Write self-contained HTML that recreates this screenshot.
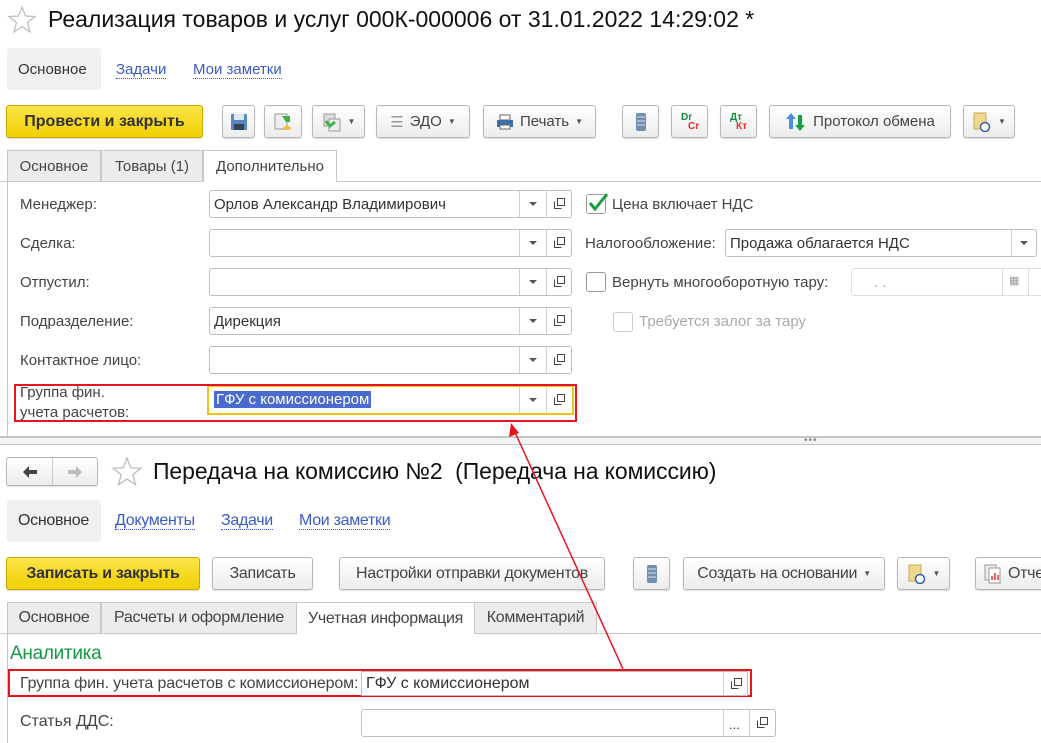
<!DOCTYPE html>
<html><head><meta charset="utf-8"><style>
*{box-sizing:border-box;margin:0;padding:0}
body{width:1041px;height:742px;overflow:hidden;background:#fff;font-family:"Liberation Sans",Arial,sans-serif;color:#333;position:relative}
.a{position:absolute;white-space:nowrap}
.btn{position:absolute;height:33px;border:1px solid #b8b8b8;border-radius:3px;background:linear-gradient(#fff,#ececec);box-shadow:0 1px 1px rgba(0,0,0,.15);font-size:15px;color:#444;display:flex;align-items:center;justify-content:center;gap:6px}
.y{background:linear-gradient(#fbe54a,#f1cf00);border-color:#c9a800;font-weight:bold;color:#333;font-size:16px}
.dd{font-size:8px;color:#555}
.tab{position:absolute;height:31px;border:1px solid #c8c8c8;border-bottom:none;background:#ececec;font-size:15px;color:#444;display:flex;align-items:center;justify-content:center}
.tab.act{background:#fff;height:32px}
.lbl{position:absolute;font-size:15px;color:#444}
.fld{position:absolute;height:28px;border:1px solid #bdbdbd;border-radius:3px;background:#fff;font-size:15px;color:#333}
.fld .t{position:absolute;left:4px;top:5px}
.fld .s1{position:absolute;top:0;bottom:0;border-left:1px solid #d0d0d0}
.tri{position:absolute;top:11px;width:0;height:0;border-left:4px solid transparent;border-right:4px solid transparent;border-top:4px solid #555}
.op{position:absolute;top:7px;width:11px;height:11px}
.lnk{position:absolute;font-size:15px;color:#3b5bc8;border-bottom:1px dotted #3b5bc8;line-height:16px}
.cb{position:absolute;width:20px;height:20px;border:1px solid #999;border-radius:3px;background:#fff}
.n{letter-spacing:-0.3px}
</style></head><body>
<svg class="a" style="left:7px;top:5px" width="30" height="30" viewBox="0 0 30 30"><polygon points="15,2 18.5,11 28,11.5 20.5,17.5 23,27 15,21.5 7,27 9.5,17.5 2,11.5 11.5,11" fill="none" stroke="#bbb" stroke-width="1.2"/></svg>
<div class="a" style="left:48px;top:6px;font-size:23px;color:#111">Реализация товаров и услуг 000К-000006 от 31.01.2022 14:29:02 *</div>
<div class="a" style="left:7px;top:48px;width:94px;height:42px;background:#f0f0f0;border-radius:3px"></div>
<div class="a" style="left:18px;top:61px;font-size:15px;color:#333">Основное</div>
<div class="lnk" style="left:116px;top:62px">Задачи</div>
<div class="lnk" style="left:193px;top:62px">Мои заметки</div>
<div class="btn y" style="left:6px;top:105px;width:197px">Провести и закрыть</div>
<div class="btn" style="left:222px;top:105px;width:33px"><svg width="18" height="18"><rect x="1" y="1" width="16" height="16" rx="1" fill="#5b86c0"/><rect x="4" y="1" width="10" height="6" fill="#dde8f5"/><rect x="4" y="11" width="10" height="6" fill="#345"/></svg></div>
<div class="btn" style="left:264px;top:105px;width:38px"><svg width="20" height="20"><rect x="2" y="2" width="12" height="15" fill="#eee" stroke="#999"/><path d="M9 4h8v6h-4z" fill="#3bb54a"/><ellipse cx="14" cy="16" rx="4" ry="2" fill="#e8c030"/></svg></div>
<div class="btn" style="left:312px;top:105px;width:53px"><svg width="20" height="20"><rect x="2" y="2" width="11" height="12" fill="#ddd" stroke="#999"/><rect x="7" y="7" width="11" height="12" fill="#eee" stroke="#999"/><path d="M4 9l4 5 5-4" stroke="#3bb54a" stroke-width="3" fill="none"/></svg><span class="dd">▼</span></div>
<div class="btn" style="left:376px;top:105px;width:94px"><span style="color:#999">☰</span> ЭДО <span class="dd">▼</span></div>
<div class="btn" style="left:483px;top:105px;width:113px"><svg width="18" height="16"><rect x="4" y="1" width="10" height="5" fill="#fff" stroke="#666"/><rect x="1" y="6" width="16" height="7" fill="#3d6fa8"/><rect x="4" y="11" width="10" height="4" fill="#fff" stroke="#666"/></svg>Печать <span class="dd">▼</span></div>
<div class="btn" style="left:622px;top:105px;width:37px"><svg width="12" height="20"><rect x="1" y="1" width="10" height="18" rx="2" fill="#6f8fb0"/><path d="M2 5h8M2 9h8M2 13h8" stroke="#dde" /></svg></div>
<div class="btn" style="left:671px;top:105px;width:37px;font-size:10px;font-weight:bold;line-height:9px;display:block;padding:7px 0 0 9px"><span style="color:#109040">Dr</span><br><span style="color:#e03030;margin-left:7px">Cr</span></div>
<div class="btn" style="left:720px;top:105px;width:37px;font-size:10px;font-weight:bold;line-height:9px;display:block;padding:7px 0 0 9px"><span style="color:#109040">Дт</span><br><span style="color:#e03030;margin-left:6px">Кт</span></div>
<div class="btn" style="left:769px;top:105px;width:182px"><svg width="22" height="22"><path d="M6 2l5 6H8v10H4V8H1z" fill="#4a8ee0"/><path d="M15 20l5-6h-3V4h-4v10h-3z" fill="#19a040"/></svg>Протокол обмена</div>
<div class="btn" style="left:963px;top:105px;width:52px"><svg width="20" height="20"><rect x="2" y="1" width="12" height="16" fill="#f0d890" stroke="#c9a850"/><circle cx="13" cy="15" r="4.5" fill="#fff" stroke="#3060b0" stroke-width="1.5"/></svg><span class="dd">▼</span></div>
<div class="a" style="left:0;top:181px;width:1041px;border-top:1px solid #c8c8c8"></div>
<div class="tab" style="left:7px;top:150px;width:94px">Основное</div>
<div class="tab" style="left:101px;top:150px;width:102px">Товары (1)</div>
<div class="tab act" style="left:203px;top:150px;width:134px">Дополнительно</div>
<div class="a" style="left:7px;top:181px;height:256px;border-left:1px solid #c8c8c8"></div>
<div class="lbl" style="left:20px;top:196px">Менеджер:</div>
<div class="lbl" style="left:20px;top:235px">Сделка:</div>
<div class="lbl" style="left:20px;top:274px">Отпустил:</div>
<div class="lbl" style="left:20px;top:313px">Подразделение:</div>
<div class="lbl" style="left:20px;top:352px">Контактное лицо:</div>
<div class="lbl" style="left:20px;top:383px;line-height:20px">Группа фин.<br>учета расчетов:</div>
<div class="fld" style="left:209px;top:190px;width:363px"><span class="t">Орлов Александр Владимирович</span><i class="s1" style="left:309px"></i><i class="tri" style="left:319px"></i><i class="s1" style="left:336px"></i><svg class="op" style="left:344px"><path d="M3.5 .5h7v7h-7zM.5 3.5v7h7" fill="none" stroke="#444"/></svg></div>
<div class="fld" style="left:209px;top:229px;width:363px"><i class="s1" style="left:309px"></i><i class="tri" style="left:319px"></i><i class="s1" style="left:336px"></i><svg class="op" style="left:344px"><path d="M3.5 .5h7v7h-7zM.5 3.5v7h7" fill="none" stroke="#444"/></svg></div>
<div class="fld" style="left:209px;top:268px;width:363px"><i class="s1" style="left:309px"></i><i class="tri" style="left:319px"></i><i class="s1" style="left:336px"></i><svg class="op" style="left:344px"><path d="M3.5 .5h7v7h-7zM.5 3.5v7h7" fill="none" stroke="#444"/></svg></div>
<div class="fld" style="left:209px;top:307px;width:363px"><span class="t">Дирекция</span><i class="s1" style="left:309px"></i><i class="tri" style="left:319px"></i><i class="s1" style="left:336px"></i><svg class="op" style="left:344px"><path d="M3.5 .5h7v7h-7zM.5 3.5v7h7" fill="none" stroke="#444"/></svg></div>
<div class="fld" style="left:209px;top:346px;width:363px"><i class="s1" style="left:309px"></i><i class="tri" style="left:319px"></i><i class="s1" style="left:336px"></i><svg class="op" style="left:344px"><path d="M3.5 .5h7v7h-7zM.5 3.5v7h7" fill="none" stroke="#444"/></svg></div>
<div class="fld" style="left:207px;top:385px;width:367px;height:30px;border:2px solid #f3c318;border-radius:0"><span class="a" style="left:5px;top:4px;background:#4a6ad0;color:#fff;font-size:15px;padding:0 2px">ГФУ с комиссионером</span><i class="s1" style="left:310px"></i><i class="tri" style="left:320px"></i><i class="s1" style="left:337px"></i><svg class="op" style="left:345px"><path d="M3.5 .5h7v7h-7zM.5 3.5v7h7" fill="none" stroke="#444"/></svg></div>
<div class="a" style="left:14px;top:384px;width:563px;height:38px;border:2px solid #e8141c"></div>
<div class="cb" style="left:586px;top:194px"></div>
<svg class="a" style="left:586px;top:190px" width="24" height="24"><path d="M4 13l5 6L21 4" stroke="#14a040" stroke-width="3" fill="none"/></svg>
<div class="lbl" style="left:612px;top:196px">Цена включает НДС</div>
<div class="lbl" style="left:585px;top:235px">Налогообложение:</div>
<div class="fld" style="left:725px;top:229px;width:312px"><span class="t">Продажа облагается НДС</span><i class="s1" style="left:285px"></i><i class="tri" style="left:294px"></i></div>
<div class="cb" style="left:586px;top:272px"></div>
<div class="lbl" style="left:612px;top:274px">Вернуть многооборотную тару:</div>
<div class="fld" style="left:851px;top:268px;width:200px;border-color:#ddd"><span class="t" style="color:#999;left:22px">. .</span><i class="s1" style="left:150px;border-color:#ddd"></i><span class="a" style="left:157px;top:5px;font-size:11px;color:#999">▦</span><i class="s1" style="left:176px;border-color:#ddd"></i></div>
<div class="cb" style="left:613px;top:312px;border-color:#ccc"></div>
<div class="lbl" style="left:639px;top:313px;color:#aaa">Требуется залог за тару</div>
<div class="a" style="left:0;top:436px;width:1041px;height:9px;background:#f4f4f4;border-top:2px solid #c4c4c4;border-bottom:1px solid #c4c4c4"></div>
<div class="a" style="left:804px;top:435px;font-size:10px;color:#888;letter-spacing:1px">•••</div>
<div class="btn" style="left:6px;top:457px;width:92px;height:29px;gap:0;justify-content:space-around"><svg width="16" height="14"><path d="M1 7l6-6v4h8v4H7v4z" fill="#444"/></svg><svg width="16" height="14"><path d="M15 7L9 1v4H1v4h8v4z" fill="#bbb"/></svg></div>
<div class="a" style="left:52px;top:458px;height:27px;border-left:1px solid #ccc"></div>
<svg class="a" style="left:111px;top:456px" width="32" height="32" viewBox="0 0 30 30"><polygon points="15,2 18.5,11 28,11.5 20.5,17.5 23,27 15,21.5 7,27 9.5,17.5 2,11.5 11.5,11" fill="none" stroke="#bbb" stroke-width="1.2"/></svg>
<div class="a" style="left:153px;top:458px;font-size:23px;color:#111;letter-spacing:-0.1px">Передача на комиссию №2&nbsp; (Передача на комиссию)</div>
<div class="a" style="left:7px;top:500px;width:94px;height:42px;background:#f0f0f0;border-radius:3px"></div>
<div class="a n" style="left:18px;top:512px;font-size:16px;color:#333">Основное</div>
<div class="lnk n" style="left:115px;top:513px;font-size:16px">Документы</div>
<div class="lnk n" style="left:221px;top:513px;font-size:16px">Задачи</div>
<div class="lnk n" style="left:299px;top:513px;font-size:16px">Мои заметки</div>
<div class="btn y n" style="left:6px;top:557px;width:194px;font-size:16px">Записать и закрыть</div>
<div class="btn n" style="left:212px;top:557px;width:101px;font-size:16px">Записать</div>
<div class="btn n" style="left:339px;top:557px;width:266px;font-size:16px">Настройки отправки документов</div>
<div class="btn" style="left:633px;top:557px;width:37px"><svg width="12" height="20"><rect x="1" y="1" width="10" height="18" rx="2" fill="#6f8fb0"/><path d="M2 5h8M2 9h8M2 13h8" stroke="#dde"/></svg></div>
<div class="btn n" style="left:683px;top:557px;width:202px;font-size:16px">Создать на основании <span class="dd">▼</span></div>
<div class="btn" style="left:897px;top:557px;width:53px"><svg width="20" height="20"><rect x="2" y="1" width="12" height="16" fill="#f0d890" stroke="#c9a850"/><circle cx="13" cy="15" r="4.5" fill="#fff" stroke="#3060b0" stroke-width="1.5"/></svg><span class="dd">▼</span></div>
<div class="btn n" style="left:975px;top:557px;width:90px;font-size:16px;justify-content:flex-start;padding-left:8px"><svg width="18" height="20"><rect x="1" y="1" width="11" height="15" fill="#eee" stroke="#999"/><rect x="5" y="4" width="11" height="15" fill="#fff" stroke="#999"/><path d="M8 16v-4M11 16v-7M14 16v-5" stroke="#d33" stroke-width="1.5"/></svg>Отчет</div>
<div class="a" style="left:0;top:633px;width:1041px;border-top:1px solid #c8c8c8"></div>
<div class="tab n" style="left:7px;top:602px;width:94px;font-size:16px">Основное</div>
<div class="tab n" style="left:101px;top:602px;width:196px;font-size:16px">Расчеты и оформление</div>
<div class="tab act n" style="left:296px;top:602px;width:179px;font-size:16px">Учетная информация</div>
<div class="tab n" style="left:474px;top:602px;width:123px;font-size:16px">Комментарий</div>
<div class="a" style="left:7px;top:633px;height:110px;border-left:1px solid #c8c8c8"></div>
<div class="a n" style="left:10px;top:643px;font-size:19px;color:#139a43">Аналитика</div>
<div class="a" style="left:8px;top:669px;width:744px;height:28px;border:2px solid #e8141c"></div>
<div class="lbl" style="left:20px;top:675px;font-size:16px;letter-spacing:-0.15px">Группа фин. учета расчетов с комиссионером:</div>
<div class="fld" style="left:361px;top:671px;width:387px;height:25px;border-radius:0"><span class="t" style="top:3px;font-size:16px">ГФУ с комиссионером</span><i class="s1" style="left:361px"></i><svg class="op" style="left:369px;top:6px"><path d="M3.5 .5h7v7h-7zM.5 3.5v7h7" fill="none" stroke="#444"/></svg></div>
<div class="lbl" style="left:20px;top:713px;font-size:16px">Статья ДДС:</div>
<div class="fld" style="left:361px;top:709px;width:415px"><span class="a" style="left:367px;top:7px;font-size:13px">...</span><i class="s1" style="left:361px"></i><i class="s1" style="left:387px"></i><svg class="op" style="left:395px"><path d="M3.5 .5h7v7h-7zM.5 3.5v7h7" fill="none" stroke="#444"/></svg></div>
<svg class="a" style="left:0;top:0" width="1041" height="742"><line x1="623" y1="669" x2="513" y2="428" stroke="#e8141c" stroke-width="1.5"/><polygon points="511,423 509,437 519,433" fill="#e8141c"/></svg>
</body></html>
